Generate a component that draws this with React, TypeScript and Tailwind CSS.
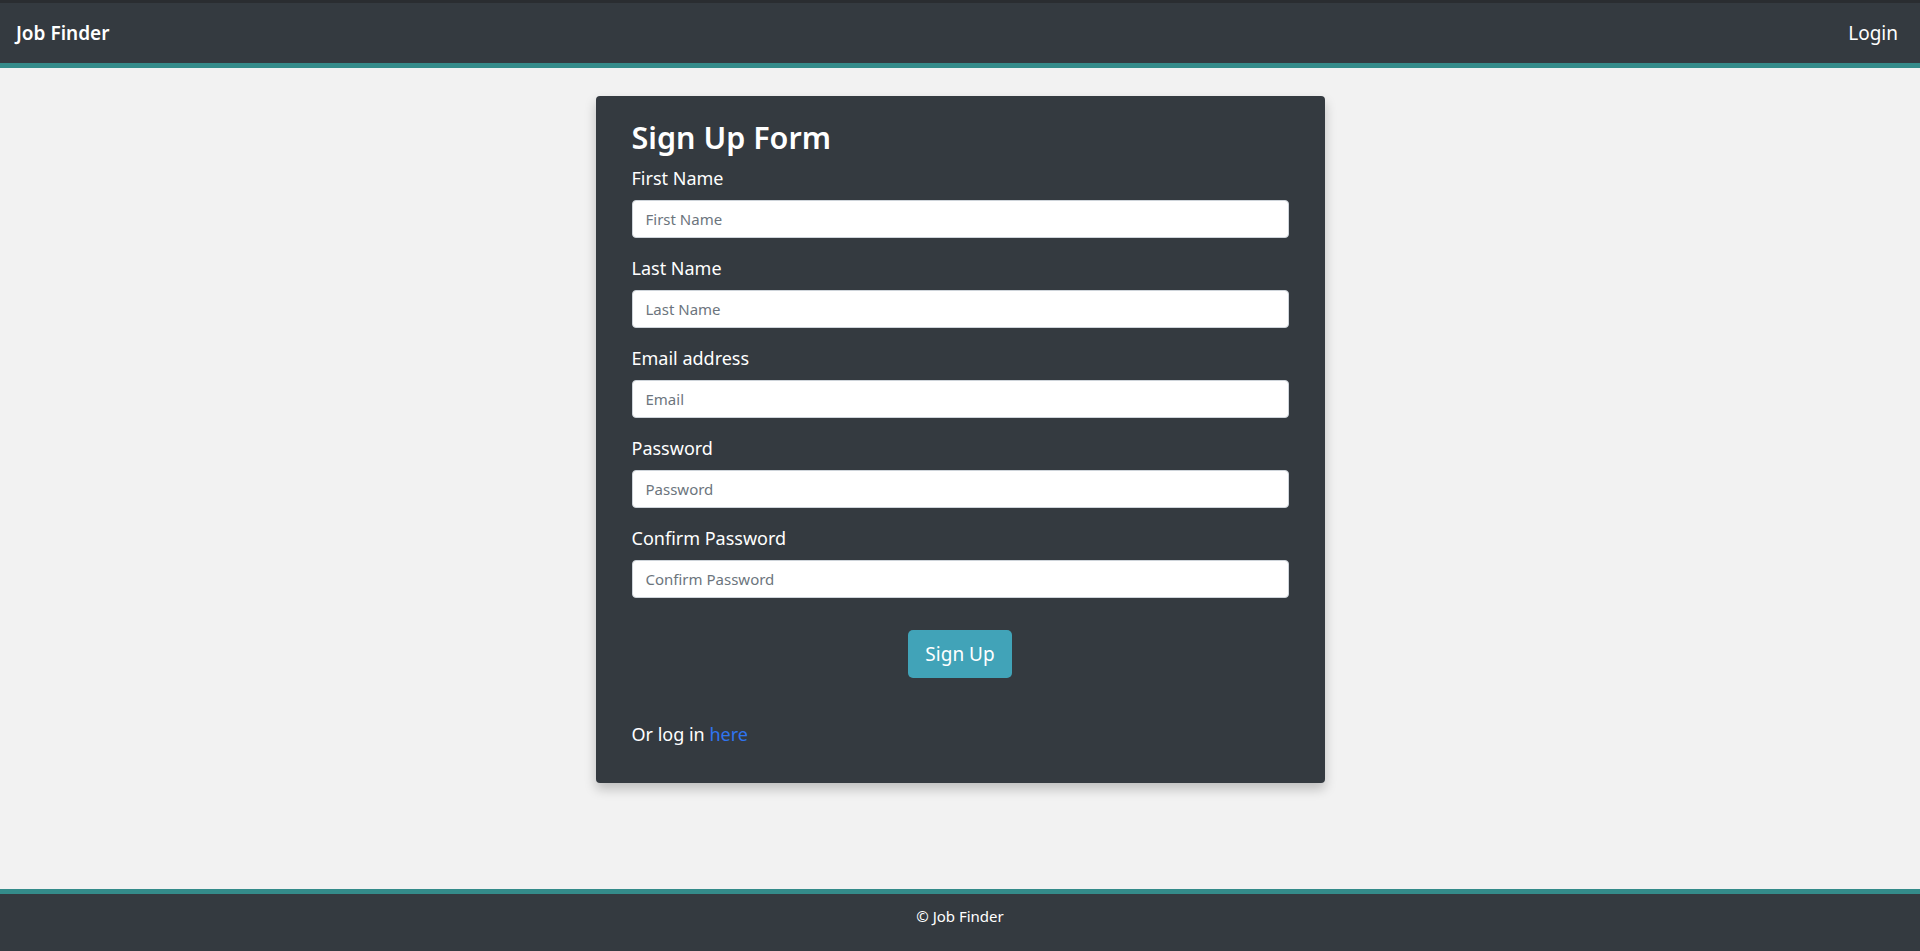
import { useState } from "react";

const FONT = "font-['Noto_Sans','Open_Sans',sans-serif]";

const fields = [
  { id: "firstName", label: "First Name", placeholder: "First Name", type: "text" },
  { id: "lastName", label: "Last Name", placeholder: "Last Name", type: "text" },
  { id: "email", label: "Email address", placeholder: "Email", type: "email" },
  { id: "password", label: "Password", placeholder: "Password", type: "password" },
  { id: "confirm", label: "Confirm Password", placeholder: "Confirm Password", type: "password" },
];

function Field({ id, label, placeholder, type }: (typeof fields)[number]) {
  const [value, setValue] = useState("");
  return (
    <div className="mb-[17px]">
      <label htmlFor={id} className="block text-[18px] leading-[27px] mb-2 text-white">
        {label}
      </label>
      <input
        id={id}
        type={type}
        value={value}
        onChange={e => setValue(e.target.value)}
        placeholder={placeholder}
        className="block w-full h-[38px] bg-white border border-[#ced4da] rounded-[4px] px-[13px] text-[15px] text-[#212529] placeholder-[#6c757d] focus:outline-none"
      />
    </div>
  );
}

export default function App() {
  return (
    <div className={`min-h-screen flex flex-col bg-[#f2f2f2] ${FONT}`}>
      <header className="border-t-[3px] border-t-[#2a2d31] bg-[#343a40] border-b-[5px] border-b-[#348b8a]">
        <nav className="h-[60px] flex items-center justify-between pl-4 pr-[22px]">
          <a href="#" className="text-[19px] font-semibold text-white">
            Job Finder
          </a>
          <a href="#" className="text-[19px] text-white">
            Login
          </a>
        </nav>
      </header>

      <main className="flex-1 flex justify-center pt-7">
        <div className="w-[729px] h-fit bg-[#343a40] rounded-[4px] shadow-[0_6px_12px_rgba(0,0,0,0.22)] px-9 pt-[22px] pb-[35px]">
          <h2 className="text-[30.5px] leading-[38px] font-semibold text-white mb-[9px]">Sign Up Form</h2>
          <form onSubmit={e => e.preventDefault()}>
            {fields.map(f => (
              <Field key={f.id} {...f} />
            ))}
            <div className="flex justify-center pt-[15px]">
              <button
                type="submit"
                className="h-12 px-[17px] rounded-[5px] bg-[#41a3b8] text-white text-[19px]"
              >
                Sign Up
              </button>
            </div>
          </form>
          <p className="mt-[42px] text-[18px] leading-[28px] text-white">
            Or log in{" "}
            <a href="#" className="text-[#2f74f0]">
              here
            </a>
          </p>
        </div>
      </main>

      <footer className="border-t-[5px] border-t-[#348b8a] bg-[#343a40] h-[62px] pt-[10px] text-center">
        <span className="text-[15px] leading-6 text-white">© Job Finder</span>
      </footer>
    </div>
  );
}
